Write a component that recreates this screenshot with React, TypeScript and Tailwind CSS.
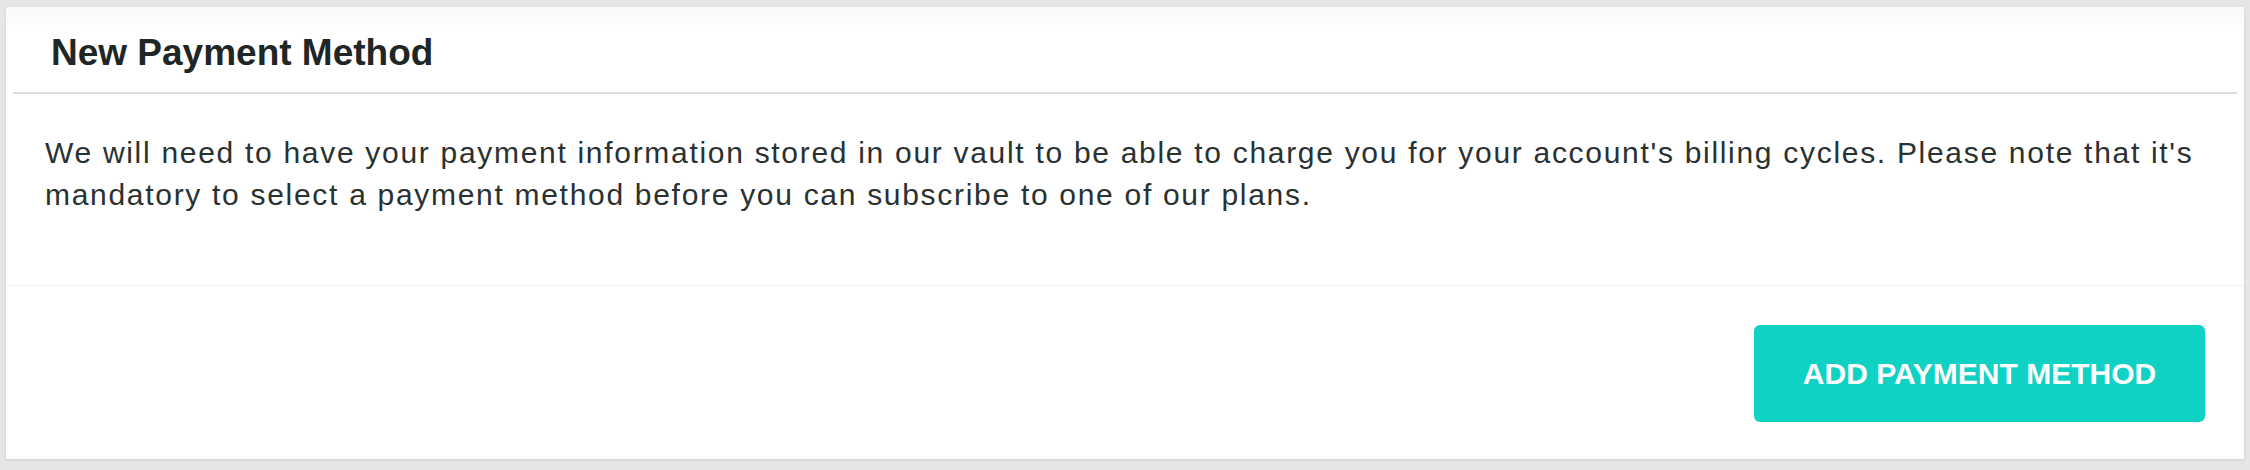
export default function App() {
  return (
    <div className="min-h-screen bg-[#e4e6e8] px-[6px] pt-[7px] pb-[11px] font-['Liberation_Sans',Arial,sans-serif]">
      <div className="bg-white shadow-[0_1px_3px_rgba(0,0,0,0.12)] h-[452px] flex flex-col">
        {/* Header */}
        <div className="px-[45px] pt-[25px] pb-[18px] bg-gradient-to-b from-[#f7f9f9] to-white to-[30%]">
          <h2 className="text-[37px] leading-[42px] font-bold text-[#1f2626]">New Payment Method</h2>
        </div>
        <div className="mx-[7px] h-[2px] bg-[#dcdede]" />

        {/* Body */}
        <div className="pl-[39px] pr-[28px] pt-[38px] pb-[69px] border-b border-[#eef0f0]">
          <p className="text-[30px] leading-[42px] tracking-[1.7px] text-[#2a3131]">
            We will need to have your payment information stored in our vault to be able to charge you for your
            account's billing cycles. Please note that it's mandatory to select a payment method before you can
            subscribe to one of our plans.
          </p>
        </div>

        {/* Footer */}
        <div className="flex justify-end px-[39px] pt-[39px]">
          <button className="w-[451px] h-[97px] rounded-[6px] bg-[#10d2c4] text-white text-[30px] font-bold flex items-center justify-center">
            ADD PAYMENT METHOD
          </button>
        </div>
      </div>
    </div>
  )
}
